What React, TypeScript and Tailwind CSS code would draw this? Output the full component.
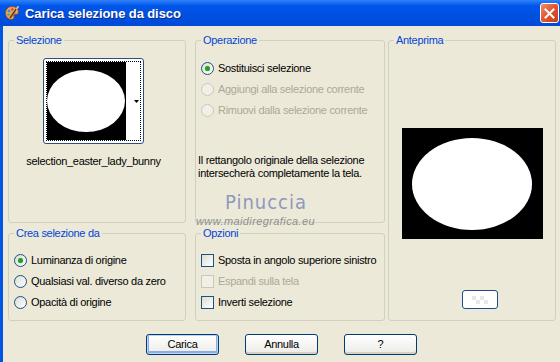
import React from "react";

const Radio = ({ checked = false, disabled = false }: { checked?: boolean; disabled?: boolean }) => (
  <span
    className={
      disabled
        ? "w-[13px] h-[13px] rounded-full border border-[#CAC8BB] bg-[#F2F0E6] flex items-center justify-center shrink-0"
        : "w-[13px] h-[13px] rounded-full border border-[#1C5180] bg-linear-to-br from-[#DCDCD7] to-white flex items-center justify-center shrink-0"
    }
  >
    {checked && <span className="w-[5px] h-[5px] rounded-full bg-[#21A121] shadow-[0_0_1px_#7CD37C]" />}
  </span>
);

const Check = ({ disabled = false }: { disabled?: boolean }) => (
  <span
    className={
      disabled
        ? "w-[13px] h-[13px] border border-[#CAC8BB] bg-[#F2F0E6] shrink-0"
        : "w-[13px] h-[13px] border border-[#1C5180] bg-linear-to-br from-[#DCDCD7] to-white shrink-0"
    }
  />
);

const Row = ({ children, disabled = false }: { children: React.ReactNode; disabled?: boolean }) => (
  <div className={disabled ? "h-[21px] flex items-center gap-[4px] text-[#ACA899]" : "h-[21px] flex items-center gap-[4px] text-black"}>
    {children}
  </div>
);

const Group = ({ title, className, children }: { title: string; className: string; children?: React.ReactNode }) => (
  <fieldset className={`border border-[#D0D0BF] rounded-[3px] px-[5px] min-w-0 ${className}`}>
    <legend className="px-[2px] text-[#0046D5] text-[11px] leading-[13px]">{title}</legend>
    {children}
  </fieldset>
);

const XpButton = ({ label, primary = false }: { label: string; primary?: boolean }) => (
  <button
    className={
      primary
        ? "w-[73px] h-[21px] rounded-[3px] border border-[#003C74] bg-linear-to-b from-white to-[#ECEBE6] shadow-[inset_0_0_0_1px_#BCD4F6,inset_0_-1px_0_2px_#89ADE4] text-[11px] text-black"
        : "w-[73px] h-[21px] rounded-[3px] border border-[#003C74] bg-linear-to-b from-white to-[#ECEBE6] shadow-[inset_0_-2px_0_#D6D0C5] text-[11px] text-black"
    }
  >
    {label}
  </button>
);

export default function App() {
  return (
    <div className="w-[560px] h-[362px] flex flex-col overflow-hidden font-['Liberation_Sans',Arial,sans-serif] text-[11px] leading-[13px] tracking-[-0.3px]">
      {/* title bar */}
      <div className="h-[26px] shrink-0 flex items-center bg-linear-to-b from-[#2F82FA] via-[#0056EA] via-[22%] to-[#004AD8]">
        <svg width="16" height="16" viewBox="0 0 16 16" className="ml-[4px]">
          <path d="M8 1.5c3.8 0 6.5 2.4 6.5 5.4 0 2-1.6 2.6-3 2.4-1.2-.2-1.9.6-1.5 1.8.5 1.4-.4 3.4-2.6 3.4C4.1 14.5 1.5 11.7 1.5 8 1.5 4.4 4.3 1.5 8 1.5z" fill="#E9A060" stroke="#8A4A1C" strokeWidth="0.8" />
          <circle cx="5" cy="6" r="1.3" fill="#2B8CFF" />
          <circle cx="8.3" cy="4.4" r="1.2" fill="#E23B2E" />
          <circle cx="11.5" cy="5.6" r="1.2" fill="#F7E03C" />
          <circle cx="4.6" cy="9.6" r="1.2" fill="#3DBB4A" />
          <path d="M6 13 L13 3" stroke="#5A3A1A" strokeWidth="1.4" />
          <path d="M12.2 4.2 L14.5 1.2" stroke="#C9C9C9" strokeWidth="1.6" />
        </svg>
        <span className="ml-[5px] text-white font-bold text-[13px] tracking-[-0.1px] [text-shadow:1px_1px_0_#0A2A8A]">
          Carica selezione da disco
        </span>
        <div className="ml-auto mr-[1px] w-[19px] h-[20px] rounded-[3px] border border-white bg-linear-to-br from-[#F08C6C] via-[#E0532D] to-[#C83A12] flex items-center justify-center">
          <svg width="11" height="11" viewBox="0 0 11 11">
            <path d="M1.5 1.5 L9.5 9.5 M9.5 1.5 L1.5 9.5" stroke="white" strokeWidth="2" strokeLinecap="square" />
          </svg>
        </div>
      </div>

      <div className="flex-1 flex">
        <div className="w-[3px] bg-[#0055E5]" />
        <div className="flex-1 bg-[#ECE9D8] flex flex-col pt-[8px] pl-[5px]">
          <div className="flex">
            {/* left column */}
            <div className="w-[178px] flex flex-col gap-[4px]">
              <Group title="Selezione" className="h-[189px]">
                <div className="flex flex-col items-center pr-[7px]">
                  <div className="mt-[11px] w-[101px] h-[86px] rounded-[3px] border border-[#2F4F7F] bg-white p-[2px]">
                    <div className="w-full h-full border border-dotted border-black flex">
                      <div className="w-[79px] h-full bg-black flex items-center">
                        <div className="w-[78px] h-[62px] rounded-[50%] bg-white" />
                      </div>
                      <div className="flex-1 flex items-center justify-end pr-[1px]">
                        <svg width="5" height="3" viewBox="0 0 5 3">
                          <path d="M0 0 H5 L2.5 3 Z" fill="black" />
                        </svg>
                      </div>
                    </div>
                  </div>
                  <div className="mt-[11px]">selection_easter_lady_bunny</div>
                </div>
              </Group>
              <Group title="Crea selezione da" className="h-[94px]">
                <div className="mt-[10px]">
                  <Row>
                    <Radio checked />
                    <span>Luminanza di origine</span>
                  </Row>
                  <Row>
                    <Radio />
                    <span>Qualsiasi val. diverso da zero</span>
                  </Row>
                  <Row>
                    <Radio />
                    <span>Opacità di origine</span>
                  </Row>
                </div>
              </Group>
            </div>

            {/* middle column */}
            <div className="ml-[9px] w-[190px] flex flex-col gap-[4px]">
              <Group title="Operazione" className="h-[189px] relative">
                <div className="mt-[11px]">
                  <Row>
                    <Radio checked />
                    <span>Sostituisci selezione</span>
                  </Row>
                  <Row disabled>
                    <Radio disabled />
                    <span>Aggiungi alla selezione corrente</span>
                  </Row>
                  <Row disabled>
                    <Radio disabled />
                    <span>Rimuovi dalla selezione corrente</span>
                  </Row>
                </div>
                <p className="mt-[33px] -ml-[3px]">
                  Il rettangolo originale della selezione
                  <br />
                  intersecherà completamente la tela.
                </p>
                {/* watermark */}
                <div className="absolute left-[29px] top-[145px] text-[20px] leading-[20px] tracking-[1px] text-[#8E98BE] font-['DejaVu_Sans_Condensed','Liberation_Sans',sans-serif]">
                  Pinuccia
                </div>
                <div className="absolute left-[0px] top-[168px] text-[11px] leading-[12px] tracking-[0.4px] italic text-[#8F8F8F]">
                  www.maidiregrafica.eu
                </div>
              </Group>
              <Group title="Opzioni" className="h-[94px]">
                <div className="mt-[10px]">
                  <Row>
                    <Check />
                    <span>Sposta in angolo superiore sinistro</span>
                  </Row>
                  <Row disabled>
                    <Check disabled />
                    <span>Espandi sulla tela</span>
                  </Row>
                  <Row>
                    <Check />
                    <span>Inverti selezione</span>
                  </Row>
                </div>
              </Group>
            </div>

            {/* right column */}
            <div className="ml-[3px] w-[168px]">
              <Group title="Anteprima" className="h-[287px]">
                <div className="flex flex-col items-center">
                  <div className="mt-[81px] w-[141px] h-[111px] bg-black flex items-center justify-center">
                    <div className="w-[120px] h-[92px] rounded-[50%] bg-white" />
                  </div>
                  <div className="mt-[51px] ml-[16px] w-[36px] h-[19px] rounded-[3px] border border-[#1E4C86] bg-white flex items-center justify-center">
                    <div className="grid grid-cols-4">
                      <span className="w-[4px] h-[4px] bg-[#E8E8E8]" />
                      <span className="w-[4px] h-[4px] bg-white" />
                      <span className="w-[4px] h-[4px] bg-[#E8E8E8]" />
                      <span className="w-[4px] h-[4px] bg-white" />
                      <span className="w-[4px] h-[4px] bg-white" />
                      <span className="w-[4px] h-[4px] bg-[#E8E8E8]" />
                      <span className="w-[4px] h-[4px] bg-white" />
                      <span className="w-[4px] h-[4px] bg-[#E8E8E8]" />
                    </div>
                  </div>
                </div>
              </Group>
            </div>
          </div>

          {/* buttons */}
          <div className="mt-[13px] flex justify-center gap-[26px] pr-[5px]">
            <XpButton label="Carica" primary />
            <XpButton label="Annulla" />
            <XpButton label="?" />
          </div>
        </div>
      </div>
    </div>
  );
}
